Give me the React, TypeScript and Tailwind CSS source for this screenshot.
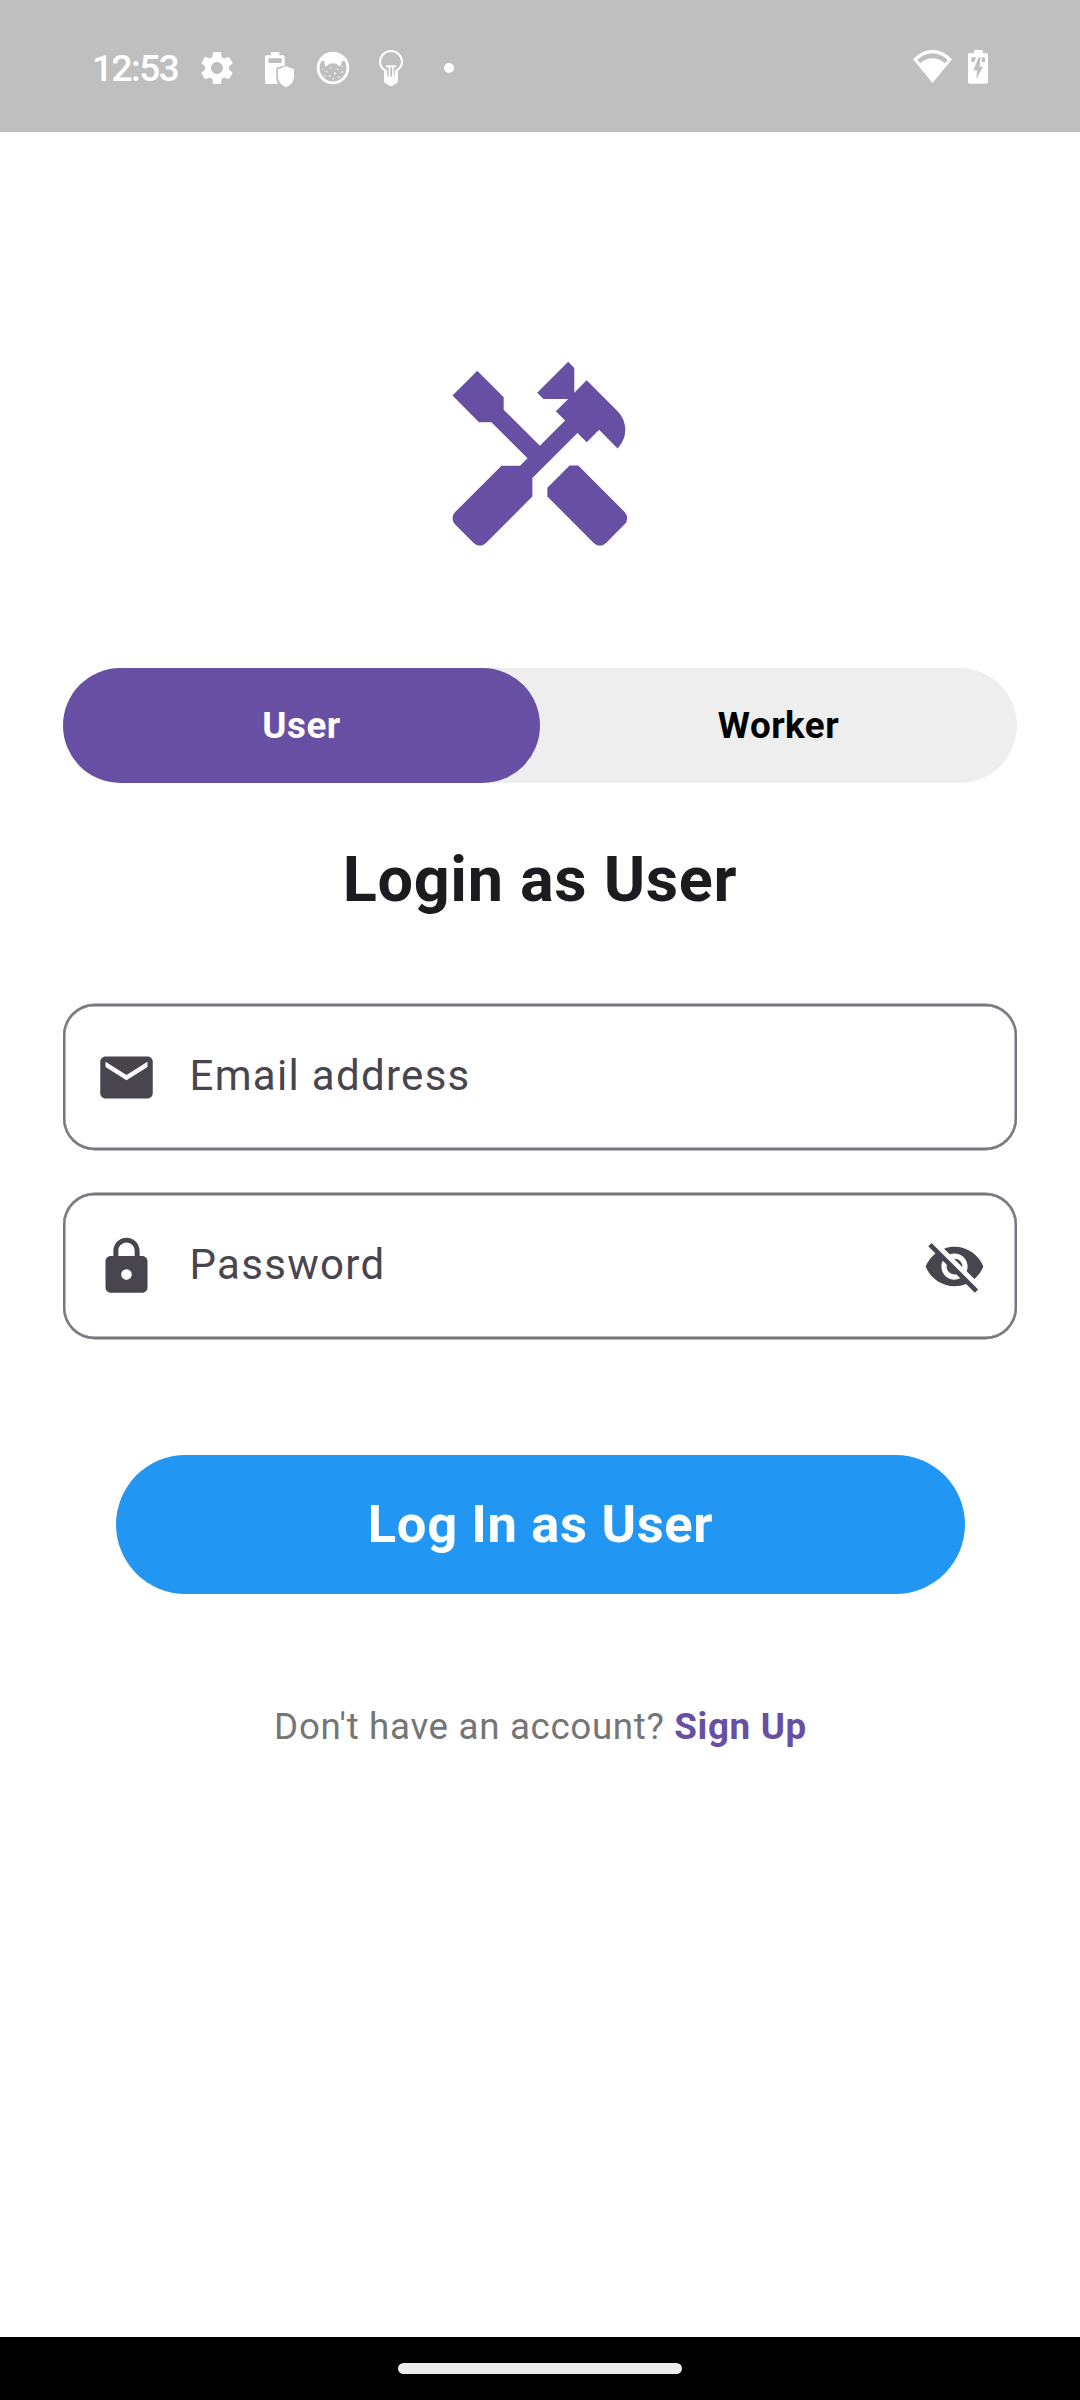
import type { ReactNode } from "react";
import { MdEmail, MdHandyman, MdLock, MdSettings, MdVisibilityOff } from "react-icons/md";

function BatteryShieldIcon() {
  return (
    <svg viewBox="579 54 96 120" className="ml-[26px] h-10 w-8 shrink-0" fill="#fff">
      <path
        fillRule="evenodd"
        d="M603 66h25v10h11q5 0 5 5v26q-12 1-25 7v30q0 10 5 18H590q-5 0-5-5V81q0-5 5-5h13zM595 85v14h40V85z"
      />
      <path d="M648 109l24 9v22q0 21-24 32q-24-11-24-32v-22z" />
    </svg>
  );
}

function CatBadgeIcon() {
  return (
    <svg viewBox="168 54 102 120" className="ml-[21px] h-10 w-[34px] shrink-0" fill="#fff">
      <circle cx="219" cy="114" r="44.5" fill="none" stroke="#fff" strokeWidth="8.500" />
      <path d="M183 92Q196 70 219 69Q242 70 255 92L246 93L241 110L229 101Q219 98 209 101L197 110L192 93z" />
      <g opacity="0.75">
        <circle cx="189" cy="118" r="2" />
        <circle cx="200" cy="125" r="2.5" />
        <circle cx="212" cy="114" r="2.5" />
        <circle cx="225" cy="130" r="3.500" />
        <circle cx="233" cy="118" r="2.5" />
        <circle cx="246" cy="126" r="3" />
        <circle cx="209" cy="138" r="3" />
        <circle cx="220" cy="146" r="2.5" />
        <circle cx="237" cy="141" r="3" />
        <circle cx="248" cy="110" r="2" />
        <circle cx="195" cy="137" r="2.5" />
      </g>
    </svg>
  );
}

function BulbIcon() {
  return (
    <svg viewBox="354 54 78 120" className="ml-7 h-10 w-[26px] shrink-0" fill="none" stroke="#fff">
      <path d="M377 126V122Q360 112 360 96A33 33 0 0 1 426 96Q426 112 409 122V126" strokeWidth="6" />
      <path d="M378 109H408" strokeWidth="6" />
      <path d="M388.500 109V142M398.500 109V142" strokeWidth="5" />
      <path d="M372 122H382V140H404V122H414V154Q413 160 405 162Q400 168 393 168Q386 168 381 162Q373 160 372 154z" fill="#fff" stroke="none" />
    </svg>
  );
}

function WifiIcon() {
  return (
    <svg viewBox="69 54 117 120" className="h-10 w-[39px] shrink-0" fill="#fff">
      <path
        fillRule="evenodd"
        d="M127.500 159L69 88Q95 60 127.500 60Q160 60 186 88zM82 90L91 100Q107 85 127.500 85Q148 85 164 100L173 90Q152 70 127.500 70Q103 70 82 90z"
      />
    </svg>
  );
}

function ChargingBatteryIcon() {
  return (
    <svg viewBox="234 54 60 120" className="ml-4 h-10 w-5 shrink-0" fill="#fff">
      <path
        fillRule="evenodd"
        d="M252 60h26v9h11q5 0 5 5v82q0 5-5 5h-50q-5 0-5-5V74q0-5 5-5h13zM244 82v14h9l5-14zM275 82v14h10V82zM266 82L250 121H261L259 148L279 110H269L271 82z"
      />
    </svg>
  );
}

function StatusBar() {
  return (
    <header className="flex h-[132px] shrink-0 items-center bg-[#bfbfbf] px-[92px] pt-1">
      <span className="w-[105px] text-[37px] leading-none font-medium tracking-[-1.5px] whitespace-nowrap text-white">
        12:53
      </span>
      <MdSettings className="size-10 shrink-0 text-white" />
      <BatteryShieldIcon />
      <CatBadgeIcon />
      <BulbIcon />
      <span className="ml-10 size-2.5 rounded-full bg-white" />
      <div className="ml-auto flex">
        <WifiIcon />
        <ChargingBatteryIcon />
      </div>
    </header>
  );
}

function Field({ icon, label, trailing }: { icon: ReactNode; label: string; trailing?: ReactNode }) {
  return (
    <div className="mx-[63px] flex h-[146px] items-center rounded-[31.5px] border-2 border-[#79747e] px-[29.5px] text-[#49454f] shadow-[0_0.5px_0_0_#79747e,0_-0.5px_0_0_#79747e,inset_0_0_0_0.5px_#79747e]">
      {icon}
      <span className="ml-8 grow pb-[3px] text-[42px] leading-[60px] tracking-[1.31px]">{label}</span>
      {trailing}
    </div>
  );
}

export default function App() {
  return (
    <div className="flex h-[2400px] w-[1080px] flex-col bg-white font-['Roboto',sans-serif]">
      <StatusBar />
      <main className="flex grow flex-col pt-[220.5px]">
        <MdHandyman className="size-[210px] shrink-0 self-center text-[#6750a4]" />

        <div className="mx-[63px] mt-[105px] grid h-[115.5px] grid-cols-2 rounded-full bg-[#eeeeee] text-[36.75px] font-bold tracking-[0.5px]">
          <button className="rounded-full bg-[#6750a4] text-white">User</button>
          <button className="rounded-full text-black">Worker</button>
        </div>

        <h1 className="mt-[59.5px] text-center text-[63px] leading-[74px] font-bold tracking-[0.656px] text-[#1d1b20]">
          Login as User
        </h1>

        <div className="mt-[87.5px] flex flex-col gap-[43px]">
          <Field icon={<MdEmail className="size-[63px] shrink-0" />} label="Email address" />
          <Field
            icon={<MdLock className="size-[63px] shrink-0" />}
            label="Password"
            trailing={<MdVisibilityOff className="size-[63px] shrink-0" />}
          />
        </div>

        <button className="mt-[116px] h-[139px] w-[849px] self-center rounded-full bg-[#2196f3] pl-px text-[52.5px] font-bold tracking-[0.656px] text-white">
          Log In as User
        </button>

        <p className="mt-[111px] pl-px text-center text-[36.75px] leading-[44px] tracking-[0.656px] text-[#757575]">
          Don't have an account? <a className="font-bold text-[#6750a4]">Sign Up</a>
        </p>
      </main>
      <footer className="flex h-[63px] shrink-0 items-center justify-center bg-black">
        <div className="h-[11px] w-[284px] rounded-full bg-[#ebebeb]" />
      </footer>
    </div>
  );
}
